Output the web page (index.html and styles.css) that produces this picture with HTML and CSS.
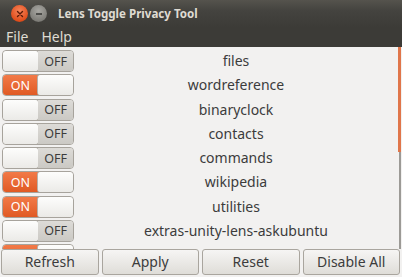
FILE: index.html
```html
<!DOCTYPE html>
<html>
<head>
<meta charset="utf-8">
<link rel="stylesheet" href="styles.css">
</head>
<body>
<div class="window">
  <div class="titlebar">
    <span class="wbtn close"><svg width="8" height="8" viewBox="0 0 8 8"><path d="M1.5 1.5 L6.5 6.5 M6.5 1.5 L1.5 6.5" stroke="#5a1a08" stroke-width="1.4" stroke-linecap="round"/></svg></span>
    <span class="wbtn min"><svg width="8" height="8" viewBox="0 0 8 8"><path d="M1 4 H7" stroke="#3a3a38" stroke-width="1.6"/></svg></span>
    <span class="title">Lens Toggle Privacy Tool</span>
  </div>
  <div class="menubar">
    <span class="menu">File</span>
    <span class="menu">Help</span>
  </div>
  <div class="content">
    <div class="list">
      <div class="row"><div class="switch off"><span class="knob"></span><span class="lbl">OFF</span></div><span class="name">files</span></div>
      <div class="row"><div class="switch on"><span class="lbl">ON</span><span class="knob"></span></div><span class="name">wordreference</span></div>
      <div class="row"><div class="switch off"><span class="knob"></span><span class="lbl">OFF</span></div><span class="name">binaryclock</span></div>
      <div class="row"><div class="switch off"><span class="knob"></span><span class="lbl">OFF</span></div><span class="name">contacts</span></div>
      <div class="row"><div class="switch off"><span class="knob"></span><span class="lbl">OFF</span></div><span class="name">commands</span></div>
      <div class="row"><div class="switch on"><span class="lbl">ON</span><span class="knob"></span></div><span class="name">wikipedia</span></div>
      <div class="row"><div class="switch on"><span class="lbl">ON</span><span class="knob"></span></div><span class="name">utilities</span></div>
      <div class="row"><div class="switch off"><span class="knob"></span><span class="lbl">OFF</span></div><span class="name">extras-unity-lens-askubuntu</span></div>
      <div class="row"><div class="switch on"><span class="lbl">ON</span><span class="knob"></span></div><span class="name">applications</span></div>
    </div>
    <div class="scrollbar"><div class="thumb"></div></div>
  </div>
  <div class="buttons">
    <button class="btn">Refresh</button>
    <button class="btn">Apply</button>
    <button class="btn">Reset</button>
    <button class="btn">Disable All</button>
  </div>
</div>
</body>
</html>
```
FILE: styles.css
```css
* { box-sizing: border-box; }
html, body { margin: 0; padding: 0; }
body {
  width: 402px; height: 277px; overflow: hidden;
  font-family: "Noto Sans", "DejaVu Sans", sans-serif;
  background: #f2f1f0;
}
.window { display: flex; flex-direction: column; height: 277px; }
.titlebar {
  height: 27px; display: flex; align-items: center;
  background: linear-gradient(#55534d, #44433f 40%, #3c3b37);
  padding-left: 11px;
}
.wbtn {
  width: 17px; height: 17px; border-radius: 50%;
  display: flex; align-items: center; justify-content: center;
  margin-right: 2px;
}
.close { background: radial-gradient(circle at 50% 35%, #f6845a, #e04e1c 70%, #b83a12); }
.min { background: radial-gradient(circle at 50% 35%, #a9a8a3, #7f7e79 70%, #5f5e5a); }
.title {
  margin-left: 9px; color: #dfdbd2; font-weight: bold; font-size: 11.6px;
}
.menubar {
  height: 20px; display: flex; align-items: center;
  background: #3c3b37; padding-left: 6px; gap: 13px;
}
.menu { color: #dfdbd2; font-size: 14px; line-height: 1; }
.content { position: relative; height: 202px; overflow: hidden; }
.list { display: flex; flex-direction: column; padding-top: 2px; }
.row { height: 24.25px; display: flex; align-items: center; padding-left: 2px; flex: none; }
.switch {
  width: 72px; height: 22px; border: 1px solid #a7a39c; border-radius: 4px;
  display: flex; overflow: hidden; flex: none;
}
.switch .knob {
  width: 35px; height: 100%; border-radius: 3px;
  background: linear-gradient(#fdfdfc, #ebeae7);
  box-shadow: 0 0 0 1px #b5b2ab;
}
.switch .lbl {
  flex: 1; display: flex; align-items: center; justify-content: center;
  font-size: 12.5px;
}
.switch.off .lbl { background: linear-gradient(#dddbd7, #cbc9c4); color: #3c3c3c; }
.switch.on .lbl { background: linear-gradient(#f27a48, #e05a24); color: #fff; }
.name { flex: 1; text-align: center; font-size: 14px; color: #3c3c3c; padding-right: 4px; line-height: 1; }
.scrollbar { position: absolute; right: 1px; top: 0; bottom: 0; width: 2px; background: #9c9a96; }
.thumb { height: 105px; width: 3px; background: #e0764a; margin-left: -1px; }
.buttons { display: flex; gap: 3px; padding: 0 2px 0 1px; height: 26px; }
.btn {
  flex: 1; height: 26px; border: 1px solid #a9a59e; border-radius: 3px;
  background: linear-gradient(#f6f5f4, #dfddd8);
  font-family: "Noto Sans", "DejaVu Sans", sans-serif; font-size: 14px; color: #3c3c3c;
  padding: 0; line-height: 1;
}
```
